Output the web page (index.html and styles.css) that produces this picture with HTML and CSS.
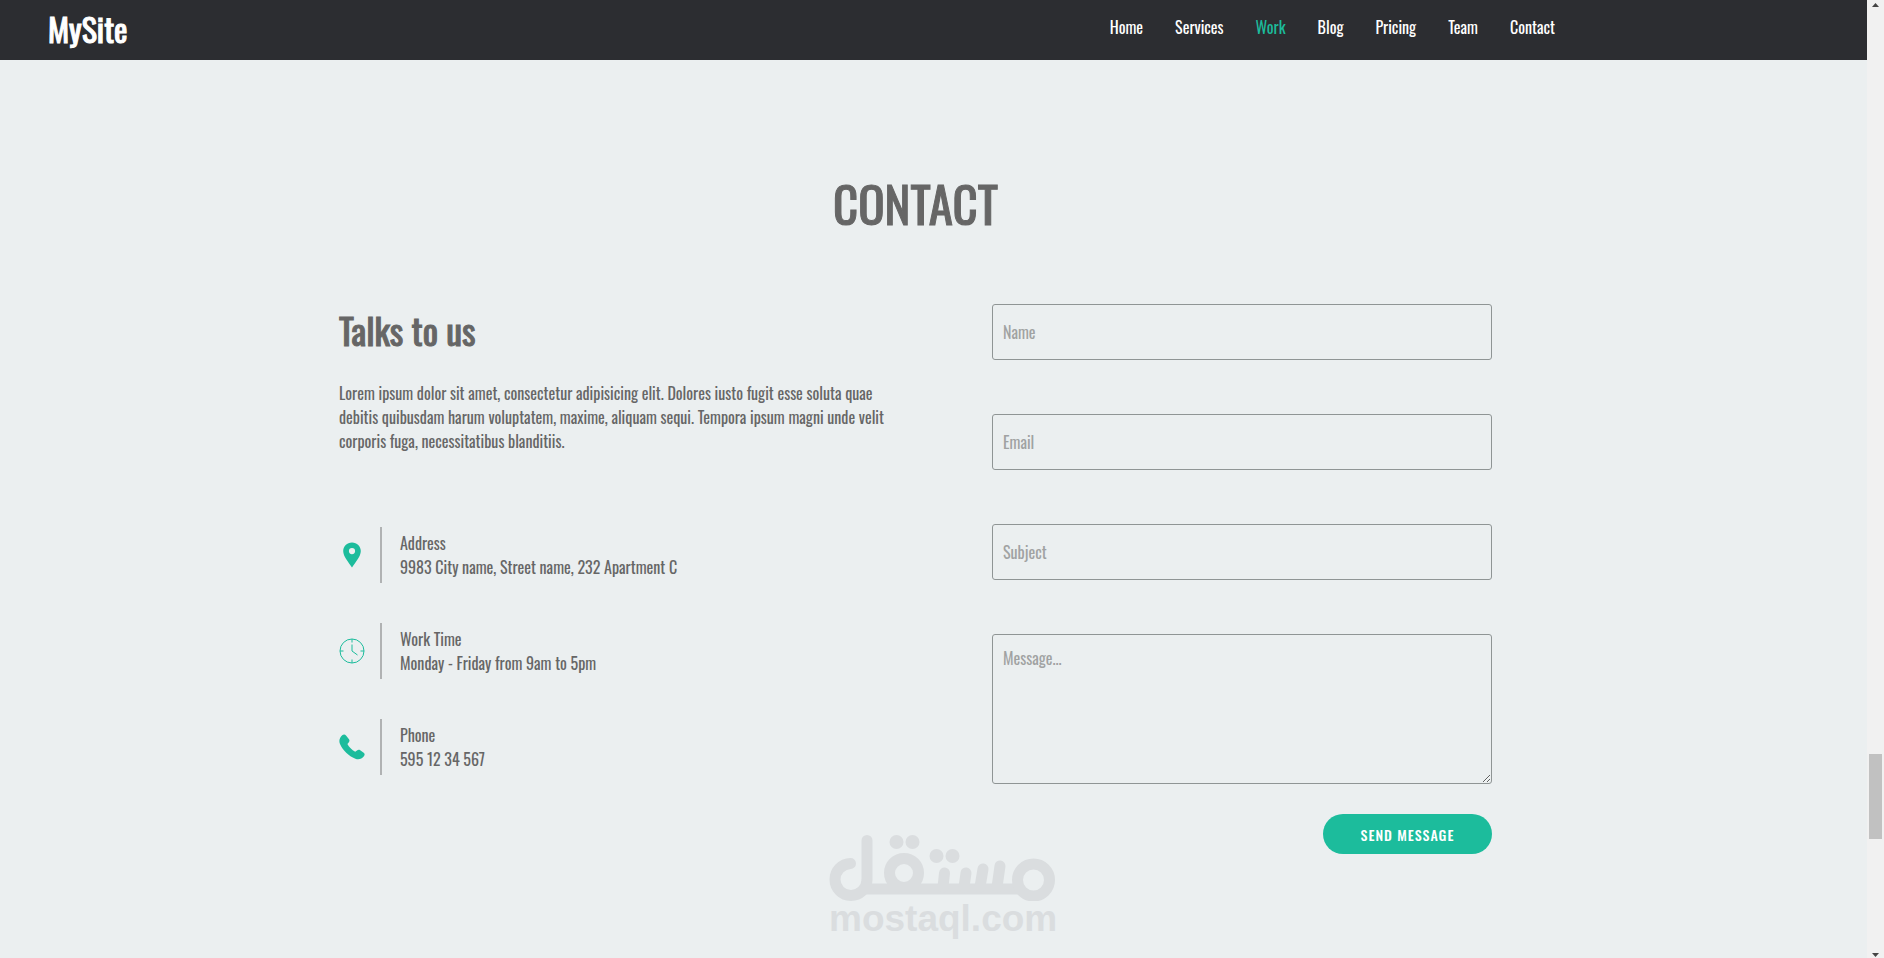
FILE: index.html
```
<!DOCTYPE html>
<html lang="en">

<head>
    <meta charset="UTF-8">
    <meta name="viewport" content="width=device-width, initial-scale=1.0">
    <title>MySite - Contact</title>
    <link rel="stylesheet" href="styles.css">
</head>

<body>

    <div class="page">

        <header class="navbar">
            <a class="logo" href="#">MySite</a>
            <nav>
                <ul class="menu">
                    <li><a href="#home">Home</a></li>
                    <li><a href="#services">Services</a></li>
                    <li><a class="active" href="#work">Work</a></li>
                    <li><a href="#blog">Blog</a></li>
                    <li><a href="#pricing">Pricing</a></li>
                    <li><a href="#team">Team</a></li>
                    <li><a href="#contact">Contact</a></li>
                </ul>
            </nav>
        </header>

        <section class="contact" id="contact">
            <div class="container">
                <h1>CONTACT</h1>

                <div class="columns">
                    <div class="info">
                        <h2>Talks to us</h2>
                        <p class="intro">Lorem ipsum dolor sit amet, consectetur adipisicing elit. Dolores iusto fugit esse soluta quae debitis quibusdam harum voluptatem, maxime, aliquam sequi. Tempora ipsum magni unde velit corporis fuga, necessitatibus blanditiis.</p>

                        <ul class="details">
                            <li>
                                <svg class="icon" viewBox="0 0 26 26" aria-hidden="true">
                                    <path fill="currentColor" fill-rule="evenodd" d="M13 0.500C8 0.500 4.200 4.200 4.200 9c0 5.500 5.300 11 8.800 16.500C16.500 20 21.800 14.500 21.800 9 21.800 4.200 18 0.500 13 0.500zM13 6a3.100 3.100 0 1 1 0 6.200A3.100 3.100 0 0 1 13 6z" />
                                </svg>
                                <div class="detail">
                                    <p>Address</p>
                                    <p>9983 City name, Street name, 232 Apartment C</p>
                                </div>
                            </li>
                            <li>
                                <svg class="icon" viewBox="0 0 26 26" aria-hidden="true">
                                    <g fill="none" stroke="currentColor" stroke-width="1">
                                        <circle cx="13" cy="13" r="12" />
                                        <path d="M13 1v3.500M13 21.500V25M1 13h3.500M21.500 13H25M13 6.500V13l5.500 4" />
                                    </g>
                                </svg>
                                <div class="detail">
                                    <p>Work Time</p>
                                    <p>Monday - Friday from 9am to 5pm</p>
                                </div>
                            </li>
                            <li>
                                <svg class="icon" viewBox="0 0 26 26" aria-hidden="true">
                                    <path fill="currentColor" d="M3.200 1.300C4.500 0.300 6 0.400 7 1.500L10 5.200c0.800 1.200 0.500 2.200-0.300 3.200L8.400 10c1.500 3 4.500 6 7.800 7.700l1.800-1.300c1-0.800 2.200-0.900 3.200-0.200l3.500 2.600c1.200 1 1.200 2.300 0.200 3.500-2 2.600-5.200 3.900-8.500 2.500C9.500 22 4 16.500 1 10 -0.400 6.800 0.600 3.500 3.200 1.300z" />
                                </svg>
                                <div class="detail">
                                    <p>Phone</p>
                                    <p>595 12 34 567</p>
                                </div>
                            </li>
                        </ul>
                    </div>

                    <form class="form">
                        <input type="text" name="name" placeholder="Name" aria-label="Name">
                        <input type="email" name="email" placeholder="Email" aria-label="Email">
                        <input type="text" name="subject" placeholder="Subject" aria-label="Subject">
                        <textarea name="message" placeholder="Message..." aria-label="Message"></textarea>
                        <button type="submit">SEND MESSAGE</button>
                    </form>
                </div>
            </div>
        </section>
    </div>

    <!-- Scrollbar -->
    <div class="scrollbar" aria-hidden="true">
        <svg class="arrow" viewBox="0 0 7 4"><path d="M0 4L3.500 0L7 4z" /></svg>
        <div class="track">
            <div class="thumb"></div>
        </div>
        <svg class="arrow" viewBox="0 0 7 4"><path d="M0 0L3.500 4L7 0z" /></svg>
    </div>

    <!-- Watermark on top of the page -->
    <div class="watermark">
        <svg viewBox="0 0 226 66" role="img" aria-label="mostaql logo">
            <g fill="none" stroke="currentColor" stroke-width="11" stroke-linecap="round">
                <path d="M21.500 28.500A16 16 0 1 0 38 45V5.500" />
                <path stroke-linecap="butt" d="M34 54H193" />
                <circle cx="75" cy="38" r="14.500" />
                <circle cx="204.500" cy="45" r="16" />
                <path d="M114 52L115.500 38M135 52L137 38M151 52L154 34M168 52L171 31" />
            </g>
            <g fill="currentColor">
                <circle cx="67.500" cy="7" r="7" />
                <circle cx="83.500" cy="7" r="7" />
                <circle cx="107.500" cy="21" r="7" />
                <circle cx="123.500" cy="21" r="7" />
            </g>
        </svg>
        <span>mostaql.com</span>
    </div>

</body>

</html>
```
FILE: styles.css
```
* {
    margin: 0;
    padding: 0;
    box-sizing: border-box;
}

body {
    display: flex;
    min-height: 100vh;
    position: relative;
    font-family: Oswald, "Liberation Sans Narrow", "Liberation Sans", sans-serif;
    font-size: 16px;
    line-height: 24px;
    color: #666;
    background-color: #ebeff0;
}

ul {
    list-style: none;
}

a {
    text-decoration: none;
    color: white;
}

.page {
    flex: 1;
}

/* Navbar */
.navbar {
    display: flex;
    justify-content: space-between;
    height: 60px;
    padding: 0 312px 0 48px;
    background-color: #2c2d31;
}

.logo,
h1,
h2 {
    font-weight: 400;
    -webkit-text-stroke: 1px;
}

.logo {
    font-size: 32px;
    line-height: 58px;
}

.menu {
    display: flex;
    gap: 32px;
    line-height: 54px;
}

.menu .active {
    color: #1cbc9c;
}

/* Contact */
.contact {
    padding: 112px 36px 80px 0;
}

.container {
    max-width: 1153px;
    margin: 0 auto;
}

h1 {
    font-size: 49px;
    line-height: 62px;
    text-align: center;
    margin-bottom: 70px;
}

.columns {
    display: grid;
    grid-template-columns: 1fr 500px;
    gap: 100px;
}

h2 {
    font-size: 36px;
    line-height: 52px;
    margin-bottom: 25px;
}

.details {
    display: flex;
    flex-direction: column;
    gap: 40px;
    margin-top: 74px;
}

.details li {
    display: flex;
    align-items: center;
    gap: 15px;
}

.icon {
    width: 26px;
    height: 26px;
    color: #1cbc9c;
}

.detail {
    height: 56px;
    padding: 4px 0 4px 18px;
    border-left: 2px solid #b0b2b3;
}

/* Form */
.form {
    display: flex;
    flex-direction: column;
}

input,
textarea {
    width: 100%;
    height: 56px;
    margin-bottom: 54px;
    padding: 0 10px;
    font: inherit;
    color: #666;
    background-color: transparent;
    border: 1px solid #8f9595;
    border-radius: 3px;
}

textarea {
    height: 150px;
    margin-bottom: 30px;
    padding-top: 11px;
}

::placeholder {
    color: #a0a2a2;
}

button {
    align-self: flex-end;
    width: 169px;
    height: 40px;
    font-family: inherit;
    font-size: 14px;
    font-weight: 500;
    letter-spacing: 1px;
    color: white;
    background-color: #1cbc9c;
    border: none;
    border-radius: 20px;
}

/* Scrollbar */
.scrollbar {
    display: flex;
    flex-direction: column;
    align-items: center;
    width: 17px;
    padding: 3px 0 1px;
    background-color: #f1f1f1;
}

.arrow {
    width: 7px;
    height: 4px;
    fill: #444;
}

.track {
    flex: 1;
    padding-top: 747px;
}

.thumb {
    width: 13px;
    height: 85px;
    background-color: #c1c1c1;
}

/* Watermark */
.watermark {
    position: absolute;
    left: 50%;
    bottom: 21px;
    width: 226px;
    margin-left: -113px;
    color: #dadddf;
    font-family: "Liberation Sans", sans-serif;
    font-size: 37px;
    font-weight: bold;
    line-height: 36px;
    text-align: center;
    pointer-events: none;
}

.watermark svg {
    display: block;
    width: 100%;
}
```
